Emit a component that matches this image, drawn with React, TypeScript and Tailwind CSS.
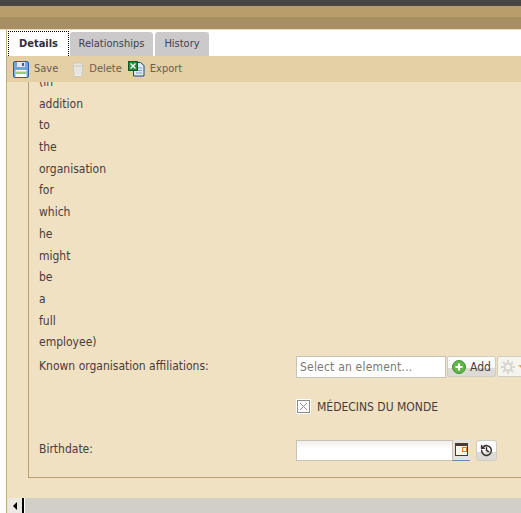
const words = ["(in", "addition", "to", "the", "organisation", "for", "which", "he", "might", "be", "a", "full", "employee)"];

function SaveIcon() {
  return (
    <svg width="16" height="17" viewBox="0 0 16 17">
      <rect x="0.5" y="0.5" width="15" height="16" rx="1.5" fill="#6aa6e8" stroke="#2c5f9e" />
      <rect x="4" y="1" width="8" height="5" fill="#dfe9f5" />
      <rect x="9" y="2" width="2" height="3" fill="#2c5f9e" />
      <rect x="2.5" y="9" width="11" height="7" fill="#fff" />
      <rect x="2.5" y="10.5" width="11" height="2.5" fill="#8fd07a" />
    </svg>
  );
}

function TrashIcon() {
  return (
    <svg width="12" height="15" viewBox="0 0 12 15">
      <path d="M1.5 3h9l-.6 10.5a1 1 0 0 1-1 1H3.1a1 1 0 0 1-1-1z" fill="#f1f0ec" stroke="#c9c6bc" />
      <path d="M4 5v8M6 5v8M8 5v8" stroke="#dcdad2" />
      <ellipse cx="6" cy="2.500" rx="5" ry="1.800" fill="#e6e4dc" stroke="#c9c6bc" />
    </svg>
  );
}

function ExcelIcon() {
  return (
    <svg width="17" height="16" viewBox="0 0 17 16">
      <path d="M5.500 1.500h7l3.500 3v10.500h-10.500z" fill="#dfe9f5" stroke="#23457f" />
      <path d="M8 7h6M8 9.500h6M8 12h6" stroke="#7f9fcb" />
      <rect x="0.500" y="0.500" width="9" height="9" fill="#1f8a3c" stroke="#14592a" />
      <path d="M2.500 2.500l5 5M7.500 2.500l-5 5" stroke="#fff" strokeWidth="1.400" />
    </svg>
  );
}

function ToolbarButton({ icon, label }: { icon: React.ReactNode; label: string }) {
  return (
    <div className="flex items-center gap-[5px]">
      {icon}
      <span className="text-[#6b5d50]">{label}</span>
    </div>
  );
}

export default function App() {
  return (
    <div className="w-[521px] h-[513px] overflow-hidden flex flex-col bg-white text-[11px] font-['DejaVu_Sans_Condensed','DejaVu_Sans',sans-serif]">
      <div className="h-[6px] bg-[#4a4646]" />
      <div className="h-[11px] bg-[#b99d6a]" />
      <div className="h-[12px] bg-[#a88f63]" />
      <div className="h-px bg-[#e8dcc0]" />
      <div className="flex-1 flex min-h-0">
        <div className="w-[6px] bg-white border-r border-[#c4ab7c] box-content" />
        <div className="flex-1 min-w-0 flex flex-col">
          <div className="h-[26px] flex items-end pl-px gap-px">
            <div className="w-[61px] h-[25px] border-x border-t border-dotted border-black flex items-center justify-center font-bold text-[#2f2f3f] bg-white">
              Details
            </div>
            <div className="w-[83px] h-[24px] bg-[#cbc9c9] rounded-t-[3px] flex items-center justify-center text-[#3f3f55]">
              Relationships
            </div>
            <div className="w-[54px] h-[24px] ml-px bg-[#cbc9c9] rounded-t-[3px] flex items-center justify-center text-[#3f3f55]">
              History
            </div>
          </div>
          <div className="h-[26px] bg-[#e4d0a4] flex items-center pl-[6px] gap-[14px]">
            <ToolbarButton icon={<SaveIcon />} label="Save" />
            <ToolbarButton icon={<TrashIcon />} label="Delete" />
            <div className="-ml-[8px]">
              <ToolbarButton icon={<ExcelIcon />} label="Export" />
            </div>
          </div>
          <div className="flex-1 min-h-0 bg-[#efe1c2] overflow-hidden pl-[21px] pb-[20px] flex flex-col text-[12px] text-[#4a3b3b]">
            <div className="flex-1 min-h-0 border-l border-b border-[#b9a071] pl-[10px] overflow-hidden">
              <div className="-mt-[10px] flex flex-col">
                {words.map((word) => (
                  <div key={word} className="h-[21.7px] leading-[21.7px]">
                    {word}
                  </div>
                ))}
              </div>
              <div className="flex items-center mt-[2px]">
                <div className="w-[257px] shrink-0 pb-[1px]">Known organisation affiliations:</div>
                <div className="flex items-center">
                  <div className="w-[150px] h-[22px] bg-white border border-[#c9c2b6] px-[3px] flex items-center text-[#7d7a74] tracking-[0.2px] shrink-0">
                    Select an element...
                  </div>
                  <div className="w-[49px] h-[21px] ml-px bg-gradient-to-b from-[#fbfbfb] from-60% to-[#dddbd6] to-60% border border-[#cfccc4] rounded-[2px] flex items-center justify-center gap-[4px] shrink-0">
                    <svg width="14" height="14" viewBox="0 0 14 14">
                      <circle cx="7" cy="7" r="6.500" fill="#63b54a" stroke="#3d8f30" />
                      <path d="M7 3.500v7M3.500 7h7" stroke="#fff" strokeWidth="2" />
                    </svg>
                    <span>Add</span>
                  </div>
                  <div className="w-[40px] h-[21px] ml-px bg-[#f6f4ef] border border-[#cfccc4] rounded-[2px] flex items-center pl-[2px] gap-[2px] shrink-0">
                    <svg width="16" height="16" viewBox="0 0 16 16" fill="none" stroke="#d6d4ce" strokeWidth="2" className="shrink-0">
                      <circle cx="8" cy="8" r="3.500" />
                      <path d="M8 1v2.500M8 12.500V15M1 8h2.500M12.500 8H15M3 3l1.800 1.800M11.200 11.200L13 13M13 3l-1.800 1.800M4.800 11.200L3 13" />
                    </svg>
                    <div className="w-0 h-0 border-x-[3px] border-x-transparent border-t-[3px] border-t-[#e8a35a] shrink-0" />
                  </div>
                </div>
              </div>
              <div className="flex items-center ml-[257px] mt-[20px] gap-[6px]">
                <div className="w-[15px] h-[15px] bg-white p-px">
                  <div className="w-full h-full border border-[#8b8b8b] flex items-center justify-center">
                    <svg width="9" height="9" viewBox="0 0 9 9" stroke="#8b8b8b">
                      <path d="M1 1l7 7M8 1l-7 7" />
                    </svg>
                  </div>
                </div>
                <span>MÉDECINS DU MONDE</span>
              </div>
              <div className="flex items-center mt-[24px]">
                <div className="w-[257px] shrink-0 pb-[2px]">Birthdate:</div>
                <div className="w-[156px] h-[21px] bg-gradient-to-b from-[#f1efeb] to-white to-40% border border-[#c9c2b6] border-r-0 shrink-0" />
                <div className="w-[18px] h-[21px] bg-[#e7e3da] border-b border-[#6f88a8] border-l border-l-[#c9c2b6] flex items-center justify-center shrink-0">
                  <svg width="13" height="13" viewBox="0 0 13 13">
                    <rect x="0.500" y="0.500" width="12" height="12" fill="#fff6e4" stroke="#4a3b30" />
                    <rect x="1" y="1" width="11" height="2" fill="#4a3b30" />
                    <rect x="7.500" y="4.500" width="4" height="4" fill="#fff" stroke="#e8741e" />
                  </svg>
                </div>
                <div className="w-[21px] h-[21px] ml-[6px] bg-gradient-to-b from-[#fbfbfb] from-60% to-[#dddbd6] to-60% border border-[#cfccc4] rounded-[3px] flex items-center justify-center shrink-0">
                  <svg width="13" height="13" viewBox="0 0 24 24" fill="none" stroke="#3a3330" strokeWidth="2.800" strokeLinecap="round" strokeLinejoin="round">
                    <path d="M3 12a9 9 0 1 0 3-6.700L3 8" />
                    <path d="M3 3v5h5" />
                    <path d="M12 7v5l4 2" />
                  </svg>
                </div>
              </div>
            </div>
          </div>
          <div className="h-[15px] bg-[#efe1c2] flex shrink-0 pl-px">
            <div className="w-[16px] h-[15px] bg-[#ece9e2] border-r-2 border-black flex items-center justify-center shrink-0">
              <div className="w-0 h-0 border-y-[4px] border-y-transparent border-r-[4px] border-r-black" />
            </div>
            <div className="flex-1 bg-[#d2cfc6] border-l border-white" />
          </div>
        </div>
      </div>
    </div>
  );
}
